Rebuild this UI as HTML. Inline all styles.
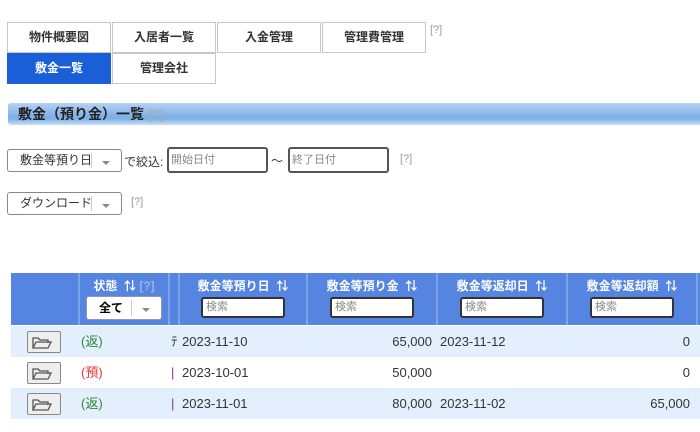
<!DOCTYPE html>
<html><head><meta charset="utf-8"><style>
*{box-sizing:border-box;margin:0;padding:0}
body{width:700px;height:432px;overflow:hidden;background:#fff;font-family:"Liberation Sans","Noto Sans CJK JP",sans-serif;font-size:12px;color:#333;position:relative}
.a{position:absolute}
.tab{position:absolute;height:31px;width:104px;border:1px solid #c8c8c8;background:#fff;font-weight:bold;font-size:12px;text-align:center;line-height:29px;color:#333}
.tab.on{background:#1a5fd8;color:#fff;border-color:#1a5fd8}
.q{color:#999;font-size:11px}
.sel{position:absolute;height:23px;border:1px solid #888;border-radius:3px;background:#fff;font-size:12px;line-height:21px;padding-left:12px}
.sel .d{position:absolute;right:0;top:3px;width:30px;height:15px;border-left:1px solid #ccc;background:#fff}
.sel .d:after{content:"";position:absolute;left:10px;top:8px;border:4px solid transparent;border-top:4px solid #888}
.inp{position:absolute;height:26px;border:2px solid #555;border-radius:3px;background:#fff;color:#888;font-size:11px;line-height:22px;padding-left:2px}
.hd{position:absolute;top:273px;height:52px;background:#5585e0;color:#fff;font-weight:bold;font-size:12px;text-align:center;border-left:2px solid #7ea2e8}
.hd .t{margin-top:6px;line-height:14px}
.hd .s{margin:4px auto 0;width:84px;height:21px;border:2px solid #333;border-radius:3px;background:#fff;color:#888;font-weight:normal;font-size:11px;text-align:left;padding-left:3px;line-height:17px}
.row{position:absolute;left:11px;width:689px;height:31px;font-size:13px;line-height:31px}
.row span{position:absolute}
.row .r{text-align:right}
.btn{position:absolute;left:16px;top:5px;width:34px;height:22px;border:1px solid #888;border-radius:2px;background:#eee}
</style></head><body>
<div class="tab" style="left:7px;top:22px">物件概要図</div>
<div class="tab" style="left:112px;top:22px">入居者一覧</div>
<div class="tab" style="left:217px;top:22px">入金管理</div>
<div class="tab" style="left:322px;top:22px">管理費管理</div>
<div class="a q" style="left:430px;top:24px">[?]</div>
<div class="tab on" style="left:7px;top:53px">敷金一覧</div>
<div class="tab" style="left:112px;top:53px">管理会社</div>

<div class="a" style="left:8px;top:103px;width:692px;height:22px;border-radius:3px 0 0 3px;background:linear-gradient(#b4d2f4,#8ab6e8 50%,#7aaee6 70%,#c9e0f8)"></div>
<div class="a" style="left:18px;top:104px;font-size:14px;font-weight:bold;color:#222;line-height:20px;white-space:nowrap">敷金（預り金）一覧 <span style="color:#aaa;font-weight:normal;font-size:14px">[?]</span></div>

<div class="sel" style="left:7px;top:149px;width:115px">敷金等預り日<div class="d"></div></div>
<div class="a" style="left:124px;top:153px">で絞込:</div>
<div class="inp" style="left:167px;top:147px;width:101px">開始日付</div>
<div class="a" style="left:271px;top:152px">～</div>
<div class="inp" style="left:288px;top:147px;width:101px">終了日付</div>
<div class="a q" style="left:400px;top:153px">[?]</div>
<div class="sel" style="left:7px;top:192px;width:115px">ダウンロード<div class="d"></div></div>
<div class="a q" style="left:131px;top:196px">[?]</div>

<div class="hd" style="left:11px;width:67px;border-left:none"></div>
<div class="hd" style="left:78px;width:90px"><div class="t">状態 &nbsp;⇅ <span style="color:#9bb3e6">[?]</span></div>
<div style="margin:3px auto 0;width:76px;height:24px;border:1px solid #999;border-radius:3px;background:#fff;color:#000;line-height:22px;text-align:left;padding-left:12px;position:relative">全て<span style="position:absolute;left:44px;top:3px;width:1px;height:16px;background:#ccc"></span><span style="position:absolute;left:55px;top:11px;border:4px solid transparent;border-top-color:#888"></span></div></div>
<div class="hd" style="left:168px;width:10px"></div>
<div class="hd" style="left:178px;width:128px"><div class="t">敷金等預り日 &nbsp;⇅</div><div class="s">検索</div></div>
<div class="hd" style="left:306px;width:130px"><div class="t">敷金等預り金 &nbsp;⇅</div><div class="s">検索</div></div>
<div class="hd" style="left:436px;width:130px"><div class="t">敷金等返却日 &nbsp;⇅</div><div class="s">検索</div></div>
<div class="hd" style="left:566px;width:130px"><div class="t">敷金等返却額 &nbsp;⇅</div><div class="s">検索</div></div>
<div class="hd" style="left:696px;width:4px"></div>

<div class="row" style="top:326px;background:#e3effd"><div class="btn"></div><span style="left:70px;color:#2a8a3a">(返)</span><span style="left:160px">ﾃ</span><span style="left:171px">2023-11-10</span><span class="r" style="left:321px;width:100px">65,000</span><span style="left:429px">2023-11-12</span><span class="r" style="left:579px;width:100px">0</span></div>
<div class="row" style="top:357px;background:#fff"><div class="btn"></div><span style="left:70px;color:#e83030">(預)</span><span style="left:160px;color:#7a3a8a">|</span><span style="left:171px">2023-10-01</span><span class="r" style="left:321px;width:100px">50,000</span><span class="r" style="left:579px;width:100px">0</span></div>
<div class="row" style="top:388px;background:#e3effd"><div class="btn"></div><span style="left:70px;color:#2a8a3a">(返)</span><span style="left:160px;color:#7a3a8a">|</span><span style="left:171px">2023-11-01</span><span class="r" style="left:321px;width:100px">80,000</span><span style="left:429px">2023-11-02</span><span class="r" style="left:579px;width:100px">65,000</span></div>
<svg class="a" style="left:31px;top:334px" width="22" height="80"><g fill="none" stroke="#555" stroke-width="1.3"><path d="M2 14V4h5l2 2h8v3M2 14l3-6h15l-3 6z"/><path transform="translate(0,31)" d="M2 14V4h5l2 2h8v3M2 14l3-6h15l-3 6z"/><path transform="translate(0,62)" d="M2 14V4h5l2 2h8v3M2 14l3-6h15l-3 6z"/></g></svg>
</body></html>
